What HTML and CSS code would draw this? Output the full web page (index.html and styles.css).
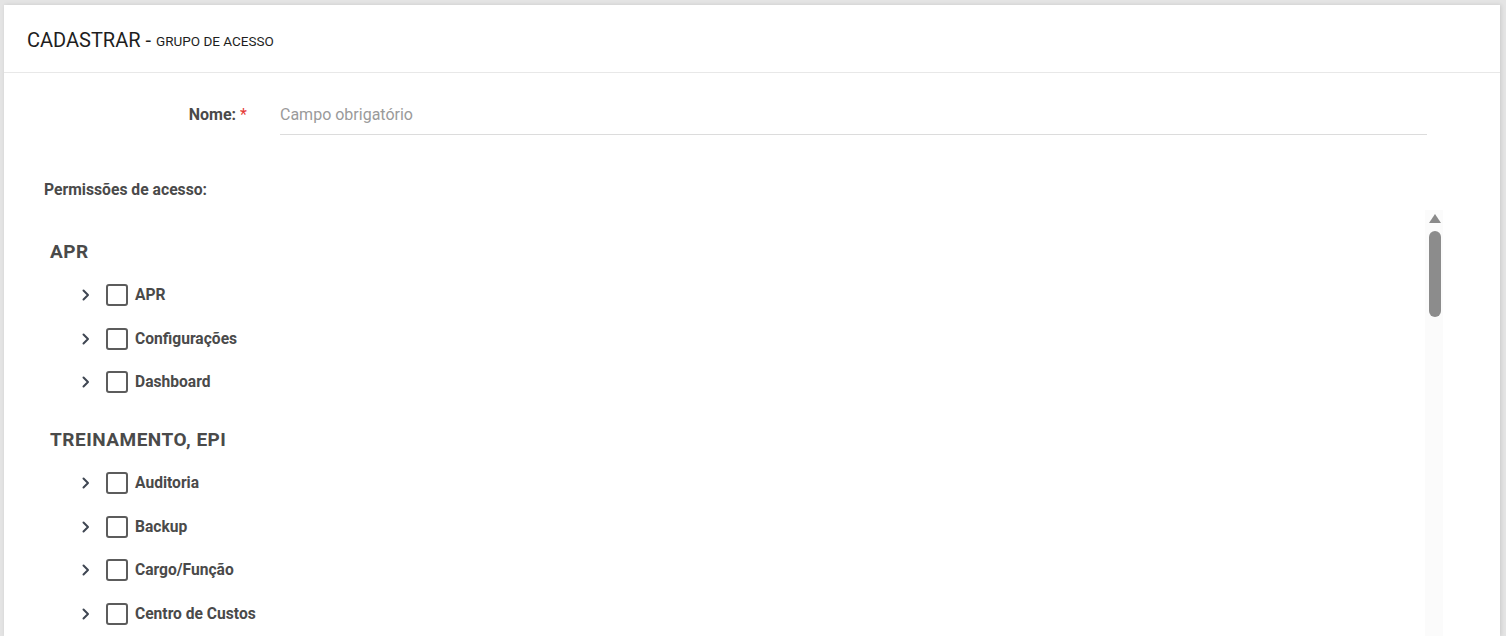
FILE: index.html
```html
<!DOCTYPE html>
<html lang="pt-BR">
<head>
<meta charset="utf-8">
<title>Cadastrar - Grupo de acesso</title>
<link rel="stylesheet" href="styles.css">
</head>
<body>
<div class="card">
  <div class="card-header">
    <span class="title">CADASTRAR</span><span class="sep">&nbsp;-&nbsp;</span><span class="subtitle">GRUPO DE ACESSO</span>
  </div>
  <div class="card-body">
    <div class="form-row">
      <label class="form-label">Nome: <span class="req">*</span></label>
      <div class="input-wrap"><input class="input" type="text" placeholder="Campo obrigatório"></div>
    </div>
    <div class="perm-label">Permissões de acesso:</div>
    <div class="scroll-area">
      <div class="tree">
        <div class="group">
          <div class="group-title">APR</div>
          <div class="item"><svg class="chev" viewBox="0 0 8 12"><path d="M1.5 1.5 L6 6 L1.5 10.5"/></svg><span class="cb"></span><span class="item-label">APR</span></div>
          <div class="item"><svg class="chev" viewBox="0 0 8 12"><path d="M1.5 1.5 L6 6 L1.5 10.5"/></svg><span class="cb"></span><span class="item-label">Configurações</span></div>
          <div class="item"><svg class="chev" viewBox="0 0 8 12"><path d="M1.5 1.5 L6 6 L1.5 10.5"/></svg><span class="cb"></span><span class="item-label">Dashboard</span></div>
        </div>
        <div class="group">
          <div class="group-title">TREINAMENTO, EPI</div>
          <div class="item"><svg class="chev" viewBox="0 0 8 12"><path d="M1.5 1.5 L6 6 L1.5 10.5"/></svg><span class="cb"></span><span class="item-label">Auditoria</span></div>
          <div class="item"><svg class="chev" viewBox="0 0 8 12"><path d="M1.5 1.5 L6 6 L1.5 10.5"/></svg><span class="cb"></span><span class="item-label">Backup</span></div>
          <div class="item"><svg class="chev" viewBox="0 0 8 12"><path d="M1.5 1.5 L6 6 L1.5 10.5"/></svg><span class="cb"></span><span class="item-label">Cargo/Função</span></div>
          <div class="item"><svg class="chev" viewBox="0 0 8 12"><path d="M1.5 1.5 L6 6 L1.5 10.5"/></svg><span class="cb"></span><span class="item-label">Centro de Custos</span></div>
        </div>
      </div>
      <div class="scrollbar">
        <div class="sb-arrow"></div>
        <div class="sb-thumb"></div>
      </div>
    </div>
  </div>
</div>
</body>
</html>
```
FILE: styles.css
```css
* { box-sizing: border-box; }
html, body { height: 100%; }
body {
  margin: 0;
  padding: 5px 6px 0 4px;
  background: #e4e4e4;
  font-family: Roboto, "Liberation Sans", Arial, sans-serif;
  overflow: hidden;
}
.card {
  background: #fff;
  height: 100%;
  box-shadow: 1px 0 4px rgba(0,0,0,0.12);
  overflow: hidden;
}
.card-header {
  height: 68px;
  border-bottom: 1px solid #e8e8e8;
  display: flex;
  align-items: center;
  padding-left: 23px;
  padding-top: 2px;
  color: #1e1e1e;
}
.title { font-size: 20px; }
.sep { font-size: 20px; }
.subtitle { font-size: 13.5px; padding-top: 3px; }
.card-body {
  padding: 21px 57px 0 40px;
}
.form-row {
  display: flex;
  align-items: center;
  margin-right: 16px;
  gap: 33px;
}
.form-label {
  width: 203px;
  text-align: right;
  font-size: 16px;
  font-weight: 700;
  color: #4a4a4a;
}
.req { color: #e53935; font-weight: 400; }
.input-wrap { flex: 1; }
.input {
  width: 100%;
  height: 41px;
  border: 0;
  border-bottom: 1px solid #dcdcdc;
  font-family: Roboto, "Liberation Sans", Arial, sans-serif;
  font-size: 16px;
  color: #333;
  padding: 0;
  outline: none;
  background: transparent;
}
.input::placeholder { color: #9a9a9a; }
.perm-label {
  margin-top: 45px;
  height: 20px;
  line-height: 20px;
  font-size: 15.7px;
  font-weight: 700;
  color: #4a4a4a;
}
.scroll-area {
  margin-top: 10px;
  display: flex;
  height: 460px;
}
.tree {
  flex: 1;
  padding-top: 27px;
  padding-left: 6px;
}
.group { margin-bottom: 21px; }
.group-title {
  height: 30px;
  line-height: 30px;
  font-size: 19px;
  letter-spacing: 0.5px;
  font-weight: 700;
  color: #4a4a4a;
  margin-bottom: 6px;
}
.item {
  height: 43.7px;
  display: flex;
  align-items: center;
  padding-left: 32px;
}
.chev {
  width: 8px;
  height: 12px;
  margin-right: 16px;
  fill: none;
  stroke: #3f4652;
  stroke-width: 2;
  stroke-linecap: round;
  stroke-linejoin: round;
}
.cb {
  width: 22px;
  height: 22px;
  border: 2px solid #5c5c5c;
  border-radius: 3px;
  margin-right: 7px;
  flex: none;
}
.item-label {
  font-size: 15.6px;
  font-weight: 700;
  color: #4a4a4a;
}
.scrollbar {
  width: 18px;
  background: #fbfbfb;
  display: flex;
  flex-direction: column;
  align-items: center;
  padding-top: 4px;
}
.sb-arrow {
  width: 0;
  height: 0;
  border-left: 6px solid transparent;
  border-right: 6px solid transparent;
  border-bottom: 9px solid #8a8a8a;
  margin-left: 1px;
}
.sb-thumb {
  margin-top: 8px;
  margin-left: 1px;
  width: 12px;
  height: 86px;
  border-radius: 6px;
  background: #8c8c8c;
}
```
